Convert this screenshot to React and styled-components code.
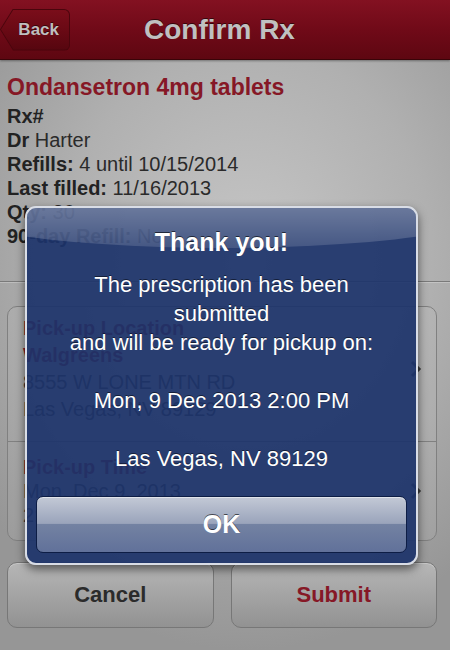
import React from 'react';
import styled, { createGlobalStyle } from 'styled-components';

const GlobalStyle = createGlobalStyle`
  html, body {
    margin: 0;
    padding: 0;
    background: #9a9a9a;
  }
  * {
    box-sizing: border-box;
  }
`;

const Screen = styled.div`
  position: relative;
  width: 450px;
  height: 650px;
  overflow: hidden;
  font-family: "Liberation Sans", Arial, sans-serif;
  background: radial-gradient(ellipse 75% 60% at 55% 40%, #c6c6c6 0%, #b0b0b0 55%, #969696 100%);
  display: flex;
  flex-direction: column;
`;

const NavBar = styled.div`
  height: 60px;
  flex-shrink: 0;
  display: grid;
  grid-template-columns: 1fr auto 1fr;
  align-items: center;
  background: linear-gradient(#831121 0%, #700a18 50%, #5e0711 100%);
  border-bottom: 1px solid #3a0408;
  box-shadow: 0 1px 2px rgba(0, 0, 0, 0.35);
`;

const BackBorder = styled.div`
  justify-self: start;
  height: 42px;
  width: 70px;
  padding: 1px;
  background: #4a050c;
  border-radius: 0 6px 6px 0;
  clip-path: polygon(13px 0, 100% 0, 100% 100%, 13px 100%, 0 50%);
`;

const BackButton = styled.div`
  height: 100%;
  width: 100%;
  display: flex;
  align-items: center;
  justify-content: flex-end;
  padding-right: 10px;
  border-radius: 0 5px 5px 0;
  clip-path: polygon(12.5px 0, 100% 0, 100% 100%, 12.5px 100%, 0 50%);
  background: linear-gradient(#7a0d1a 0%, #680914 55%, #56060f 100%);
  color: #bfbfbf;
  font-weight: bold;
  font-size: 17px;
  text-shadow: 0 -1px 0 rgba(0, 0, 0, 0.5);
`;

const Title = styled.div`
  margin-right: 11px;
  color: #c0c0c0;
  font-weight: bold;
  font-size: 28px;
  text-shadow: 0 -1px 0 rgba(0, 0, 0, 0.55);
`;

const Details = styled.div`
  padding: 14px 13px 0 7px;
`;

const DrugName = styled.div`
  color: #861826;
  font-weight: bold;
  font-size: 23px;
  line-height: 26px;
  margin-bottom: 4px;
`;

const InfoLine = styled.div`
  color: #2a2a2a;
  font-size: 20px;
  line-height: 24px;
  b {
    color: #222;
  }
`;

const Divider = styled.div`
  margin-top: 33px;
  height: 1px;
  background: #7a7a7a;
  box-shadow: 0 1px 0 rgba(255, 255, 255, 0.25);
`;

const Card = styled.div`
  margin: 24px 13px 0 7px;
  border: 1px solid #808080;
  border-radius: 10px;
  background: rgba(255, 255, 255, 0.06);
`;

const CardRow = styled.div`
  display: flex;
  align-items: center;
  justify-content: space-between;
  padding: ${p => p.$pad};
  border-top: ${p => (p.$first ? 'none' : '1px solid #808080')};
`;

const RowText = styled.div`
  font-size: 20px;
  line-height: ${p => p.$lh}px;
  color: #333;
`;

const RowLabel = styled.div`
  color: #861826;
  font-weight: bold;
`;

const Chevron = styled.svg`
  width: 12px;
  height: 18px;
  margin-right: 14px;
  flex-shrink: 0;
`;

const ButtonBar = styled.div`
  display: grid;
  grid-template-columns: 1fr 1fr;
  gap: 17px;
  margin: 21px 13px 0 7px;
`;

const ActionButton = styled.div`
  height: 66px;
  display: flex;
  align-items: center;
  justify-content: center;
  border: 1px solid #777;
  border-radius: 10px;
  background: linear-gradient(#b6b6b6 0%, #a4a4a4 50%, #929292 100%);
  box-shadow: inset 0 1px 0 rgba(255, 255, 255, 0.25);
  font-size: 22px;
  font-weight: bold;
  color: ${p => (p.$primary ? '#861826' : '#2b2b2b')};
`;

const Alert = styled.div`
  position: absolute;
  left: 25px;
  top: 206px;
  width: 393px;
  height: 359px;
  border: 2px solid #d9dde6;
  border-radius: 11px;
  overflow: hidden;
  background: rgba(28, 51, 106, 0.92);
  box-shadow: 0 4px 10px rgba(0, 0, 0, 0.55);
  padding: 19px 9px 10px;
  display: flex;
  flex-direction: column;
  align-items: stretch;
  color: #fff;
  text-align: center;

  &::before {
    content: '';
    position: absolute;
    left: -30%;
    top: -62px;
    width: 160%;
    height: 102px;
    border-radius: 50%;
    background: linear-gradient(rgba(255, 255, 255, 0.4) 40%, rgba(255, 255, 255, 0.13) 100%);
    pointer-events: none;
  }
`;

const AlertTitle = styled.div`
  position: relative;
  font-size: 25px;
  font-weight: bold;
  line-height: 30px;
  text-shadow: 0 -1px 0 rgba(0, 0, 0, 0.6);
`;

const AlertBody = styled.div`
  position: relative;
  margin-top: 13px;
  font-size: 22px;
  line-height: 29px;
  text-shadow: 0 -1px 0 rgba(0, 0, 0, 0.5);
`;

const OkButton = styled.div`
  margin-top: auto;
  height: 57px;
  display: flex;
  align-items: center;
  justify-content: center;
  border: 1px solid #0d1d45;
  border-radius: 7px;
  background: linear-gradient(#c3c9d6 0%, #9aa4bb 48%, #7382a2 50%, #61719a 100%);
  box-shadow: inset 0 1px 0 rgba(255, 255, 255, 0.5);
  font-size: 25px;
  font-weight: bold;
  color: #fff;
  text-shadow: 0 -1px 0 rgba(0, 0, 0, 0.6);
`;

const ChevronIcon = () => (
  <Chevron viewBox="0 0 12 18">
    <path d="M2 2 L9 9 L2 16" fill="none" stroke="#3a3a3a" strokeWidth="3" />
  </Chevron>
);

export default function App() {
  return (
    <>
      <GlobalStyle />
      <Screen>
        <NavBar>
          <BackBorder>
            <BackButton>Back</BackButton>
          </BackBorder>
          <Title>Confirm Rx</Title>
          <div />
        </NavBar>

        <Details>
          <DrugName>Ondansetron 4mg tablets</DrugName>
          <InfoLine><b>Rx#</b></InfoLine>
          <InfoLine><b>Dr</b> Harter</InfoLine>
          <InfoLine><b>Refills:</b> 4 until 10/15/2014</InfoLine>
          <InfoLine><b>Last filled:</b> 11/16/2013</InfoLine>
          <InfoLine><b>Qty:</b> 30</InfoLine>
          <InfoLine><b>90-day Refill:</b> No</InfoLine>
        </Details>

        <Divider />

        <Card>
          <CardRow $first $pad="8px 0 18px 15px">
            <RowText $lh={27}>
              <RowLabel>Pick-up Location</RowLabel>
              <RowLabel>Walgreens</RowLabel>
              <div>8555 W LONE MTN RD</div>
              <div>Las Vegas, NV 89129</div>
            </RowText>
            <ChevronIcon />
          </CardRow>
          <CardRow $pad="13px 0 13px 15px">
            <RowText $lh={24}>
              <RowLabel>Pick-up Time</RowLabel>
              <div>Mon, Dec 9, 2013</div>
              <div>2:00 PM</div>
            </RowText>
            <ChevronIcon />
          </CardRow>
        </Card>

        <ButtonBar>
          <ActionButton>Cancel</ActionButton>
          <ActionButton $primary>Submit</ActionButton>
        </ButtonBar>

        <Alert>
          <AlertTitle>Thank you!</AlertTitle>
          <AlertBody>
            <div>The prescription has been</div>
            <div>submitted</div>
            <div>and will be ready for pickup on:</div>
            <div>&nbsp;</div>
            <div>Mon, 9 Dec 2013 2:00 PM</div>
            <div>&nbsp;</div>
            <div>Las Vegas, NV 89129</div>
          </AlertBody>
          <OkButton>OK</OkButton>
        </Alert>
      </Screen>
    </>
  );
}
